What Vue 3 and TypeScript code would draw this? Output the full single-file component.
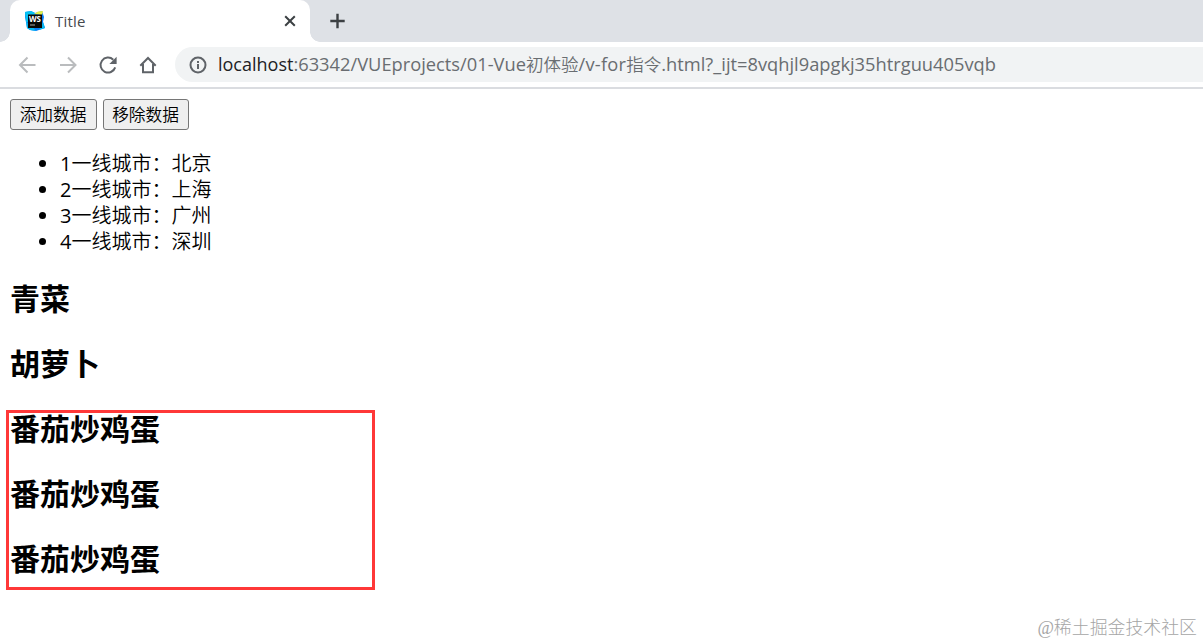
<template>
	<div class="browser">
		<header class="tab-strip">
			<div class="strip-edge"></div>
			<div class="tab">
				<svg class="favicon" width="22" height="22" viewBox="0 0 22 22">
					<path d="M1 2 7 1 11 3 18 1 20 7 19 12 21 18 15 20 12 21 6 20 3 18 2 12 1 7z" fill="#087cfa" />
					<path d="M1 2 7 1 11 3 9 12 2 12z" fill="#07c3f2" />
					<path d="M6 20 3 18 2 12 8 16 12 21zM19 12 21 18 15 20z" fill="#07b9f2" />
					<path d="M10 4 14 1.500 19 1 18 5z" fill="#e3ef45" />
					<rect x="4" y="4.500" width="14" height="13.500" fill="#080808" />
					<text x="4.900" y="11.600" textLength="12" lengthAdjust="spacingAndGlyphs">WS</text>
					<rect x="6" y="14.500" width="5" height="1" fill="#aaa" />
				</svg>
				<span class="tab-title">Title</span>
				<svg class="close" width="14" height="14" viewBox="0 0 14 14">
					<path d="M2.200 2.200 11.800 11.800M11.800 2.200 2.200 11.800" />
				</svg>
			</div>
			<svg class="new-tab" width="16" height="16" viewBox="0 0 16 16">
				<path d="M8.500 .8V15.200M1.300 8H15.700" />
			</svg>
		</header>

		<nav class="toolbar">
			<svg class="nav-icon muted" viewBox="0 0 20 20">
				<path d="M17.500 10H3M9.500 2.500 2 10 9.500 17.500" />
			</svg>
			<svg class="nav-icon muted" viewBox="0 0 20 20">
				<path d="M2 10H17M10 2.500 17.500 10 10 17.500" />
			</svg>
			<svg class="nav-icon" viewBox="0 0 20 20">
				<path d="M17.200 12.400A7.500 7.500 0 1 1 15.300 4.700" />
				<path class="solid" d="M18.600 1.800V9H11.400z" />
			</svg>
			<svg class="nav-icon" viewBox="0 0 20 20">
				<path d="M5 9V17.300H15V9M2.300 10.700 10 3 17.700 10.700" />
			</svg>
			<div class="address">
				<svg class="info" width="18" height="18" viewBox="0 0 18 18">
					<circle cx="9" cy="9" r="7.500" />
					<path d="M9 8V13M9 5V7" />
				</svg>
				<div class="url">
					<span v-for="part in urlParts" :key="part.text" :class="part.kind">{{ part.text }}</span>
				</div>
			</div>
		</nav>

		<main class="page">
			<div class="actions">
				<button type="button">添加数据</button>
				<button type="button">移除数据</button>
			</div>
			<ul>
				<li v-for="(city, index) in cities" :key="city"><span class="number">{{ index + 1 }}</span>一线城市：{{ city }}</li>
			</ul>
			<h2 v-for="(food, index) in foods" :key="index">{{ food }}</h2>
			<div class="highlight"></div>
			<span class="watermark">@稀土掘金技术社区</span>
		</main>
	</div>
</template>

<script setup lang="ts">
interface UrlPart {
	text: string;
	kind: string;
}

const urlParts: UrlPart[] = [
	{ text: 'localhost', kind: 'host' },
	{ text: ':63342/VUEprojects/01-Vue', kind: 'path' },
	{ text: '初体验', kind: 'han' },
	{ text: '/v-for', kind: 'route' },
	{ text: '指令', kind: 'han' },
	{ text: '.html?_ijt=8vqhjl9apgkj35htrguu405vqb', kind: 'query' },
];

const cities: string[] = ['北京', '上海', '广州', '深圳'];
const foods: string[] = ['青菜', '胡萝卜', '番茄炒鸡蛋', '番茄炒鸡蛋', '番茄炒鸡蛋'];
</script>

<style>
body {
	margin: 0;
	background: #fff;
}
</style>

<style scoped>
.browser {
	display: flex;
	flex-direction: column;
	height: 644px;
	overflow: hidden;
	font-family: 'Open Sans', 'Noto Sans CJK SC', sans-serif;
}

.browser svg {
	flex: none;
	fill: none;
}

.tab-strip {
	display: flex;
	height: 42px;
	background: #dee1e6;
}

.strip-edge {
	width: 10px;
	background: radial-gradient(circle at 0 32px, #dee1e6 9.5px, #fff 10px);
	clip-path: inset(32px 0 0 0);
}

.tab {
	position: relative;
	box-sizing: border-box;
	display: flex;
	align-items: center;
	width: 300px;
	padding: 0 13px 0 14px;
	border-radius: 10px 10px 0 0;
	background: #fff;
}

.tab::after {
	content: '';
	position: absolute;
	left: 100%;
	bottom: 0;
	width: 10px;
	height: 10px;
	background: radial-gradient(circle at 10px 0, #dee1e6 9.5px, #fff 10px);
}

.favicon text {
	fill: #fff;
	font: bold 8px 'Open Sans', sans-serif;
}

.tab-title {
	flex: 1;
	margin-left: 9px;
	color: #45494d;
	font-size: 15px;
	letter-spacing: 0.2px;
}

.close,
.new-tab {
	stroke: #3c4043;
	stroke-width: 2;
}

.new-tab {
	margin: 13px 0 0 19px;
	stroke-width: 2.4;
}

.toolbar {
	box-sizing: border-box;
	display: flex;
	align-items: center;
	gap: 20px;
	height: 47px;
	padding-left: 17.5px;
	border-bottom: 2px solid #dadce0;
}

.nav-icon {
	width: 20px;
	height: 20px;
	stroke: #5f6368;
	stroke-width: 2;
}

.nav-icon .solid {
	fill: #5f6368;
	stroke: none;
}

.nav-icon.muted {
	stroke: #babcbe;
}

.address {
	display: flex;
	flex: 1;
	align-items: center;
	height: 35px;
	margin-left: -2.5px;
	padding-left: 13.5px;
	border-radius: 18px 0 0 18px;
	background: #f1f3f4;
}

.info {
	stroke: #5f6368;
	stroke-width: 2;
}

.url {
	display: flex;
	align-items: baseline;
	margin-left: 11.5px;
	padding-bottom: 2px;
	color: #696d71;
	font-size: 18.3px;
	line-height: 33px;
	white-space: nowrap;
}

.url .host {
	color: #202124;
	font-size: 18px;
}

.url .han {
	font-size: 17.5px;
	font-weight: 350;
}

.url .route {
	letter-spacing: 0.25px;
}

.page {
	position: relative;
	flex: 1;
	padding: 10px;
	color: #000;
	font-size: 20px;
}

.actions {
	display: flex;
	gap: 6px;
}

button {
	box-sizing: border-box;
	width: 87px;
	height: 31px;
	padding: 0 1px 1px 0;
	border: 1px solid #767676;
	border-radius: 3px;
	background: #efefef;
	color: #000;
	font: 350 16.7px/27px 'Noto Sans CJK SC', sans-serif;
}

button + button {
	width: 86px;
}

ul {
	margin: 21px 0 24px;
	padding-left: 50px;
}

li {
	height: 26px;
	font-weight: 350;
	line-height: 26px;
}

.number {
	font-weight: 400;
}

h2 {
	height: 40px;
	margin: 0 0 25px;
	font-size: 30px;
	font-weight: bold;
	line-height: 40px;
}

/* frame drawn over the last three headings */
.highlight {
	position: absolute;
	top: 321px;
	left: 6px;
	box-sizing: border-box;
	width: 369px;
	height: 180px;
	border: 3px solid #ff3838;
}

.watermark {
	position: absolute;
	right: 6px;
	bottom: 4px;
	color: #a5a5a5;
	font: 300 17.9px/24px 'Liberation Serif', 'Noto Sans CJK SC', serif;
	white-space: nowrap;
}
</style>
